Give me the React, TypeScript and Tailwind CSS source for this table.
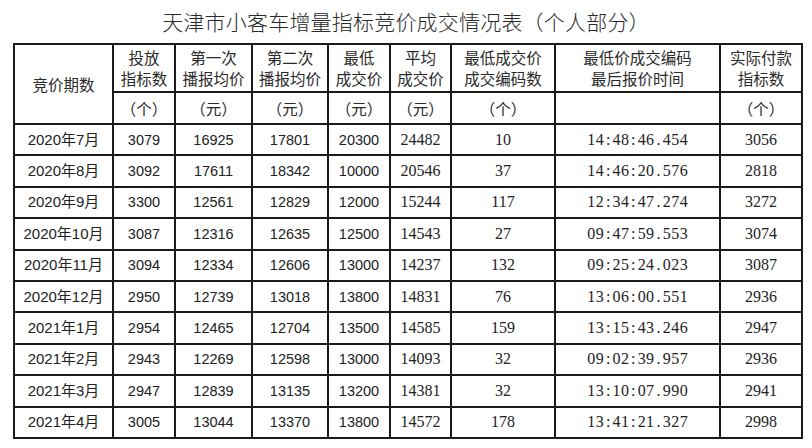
import React from "react";

const rows: string[][] = [
  ["2020年7月", "3079", "16925", "17801", "20300", "24482", "10", "14:48:46.454", "3056"],
  ["2020年8月", "3092", "17611", "18342", "10000", "20546", "37", "14:46:20.576", "2818"],
  ["2020年9月", "3300", "12561", "12829", "12000", "15244", "117", "12:34:47.274", "3272"],
  ["2020年10月", "3087", "12316", "12635", "12500", "14543", "27", "09:47:59.553", "3074"],
  ["2020年11月", "3094", "12334", "12606", "13000", "14237", "132", "09:25:24.023", "3087"],
  ["2020年12月", "2950", "12739", "13018", "13800", "14831", "76", "13:06:00.551", "2936"],
  ["2021年1月", "2954", "12465", "12704", "13500", "14585", "159", "13:15:43.246", "2947"],
  ["2021年2月", "2943", "12269", "12598", "13000", "14093", "32", "09:02:39.957", "2936"],
  ["2021年3月", "2947", "12839", "13135", "13200", "14381", "32", "13:10:07.990", "2941"],
  ["2021年4月", "3005", "13044", "13370", "13800", "14572", "178", "13:41:21.327", "2998"],
];

const widths = [99, 62, 77, 76, 62, 61, 104, 165, 82];

const cjk = "font-['Noto_Sans_CJK_SC',sans-serif] font-light";
const sans = "font-['Liberation_Sans','Noto_Sans_CJK_SC',sans-serif]";
const serif = "font-['Liberation_Serif','Noto_Sans_CJK_SC',serif]";

function TimeText({ t }: { t: string }) {
  return (
    <span className="inline-flex">
      {t.split("").map((c, i) => (
        <span key={i} className="inline-block w-[8.4px] text-center">
          {c}
        </span>
      ))}
    </span>
  );
}

const th = "border-2 border-[#1a1a1a] text-center align-middle p-0 text-[15.5px] leading-[21px] text-[#2a2a2a] font-normal";
const td = "border-2 border-[#1a1a1a] text-center align-middle p-0 text-[#222] leading-[20px]";

function Two({ a, b }: { a: string; b: string }) {
  return (
    <div className="flex flex-col items-center">
      <span>{a}</span>
      <span>{b}</span>
    </div>
  );
}

export default function App() {
  return (
    <div className="w-[812px] h-[448px] bg-white overflow-hidden">
      <div className={`h-[43px] flex items-center justify-center pt-[1px] text-[21px] text-[#2a2a2a] tracking-[0.2px] ${cjk}`}>
        天津市小客车增量指标竞价成交情况表（个人部分）
      </div>
      <table className="ml-[13px] w-[789px] table-fixed border-collapse border-2 border-black">
        <colgroup>
          {widths.map((w, i) => (
            <col key={i} style={{ width: w }} />
          ))}
        </colgroup>
        <thead>
          <tr className="h-[48px]">
            <th rowSpan={2} className={`${th} ${cjk}`}>竞价期数</th>
            <th className={`${th} ${cjk}`}><Two a="投放" b="指标数" /></th>
            <th className={`${th} ${cjk}`}><Two a="第一次" b="播报均价" /></th>
            <th className={`${th} ${cjk}`}><Two a="第二次" b="播报均价" /></th>
            <th className={`${th} ${cjk}`}><Two a="最低" b="成交价" /></th>
            <th className={`${th} ${cjk}`}><Two a="平均" b="成交价" /></th>
            <th className={`${th} ${cjk}`}><Two a="最低成交价" b="成交编码数" /></th>
            <th className={`${th} ${cjk}`}><Two a="最低价成交编码" b="最后报价时间" /></th>
            <th className={`${th} ${cjk}`}><Two a="实际付款" b="指标数" /></th>
          </tr>
          <tr className="h-[32px]">
            <th className={`${th} ${cjk}`}>（个）</th>
            <th className={`${th} ${cjk}`}>（元）</th>
            <th className={`${th} ${cjk}`}>（元）</th>
            <th className={`${th} ${cjk}`}>（元）</th>
            <th className={`${th} ${cjk}`}>（元）</th>
            <th className={`${th} ${cjk}`}>（个）</th>
            <th className={th}></th>
            <th className={`${th} ${cjk}`}>（个）</th>
          </tr>
        </thead>
        <tbody>
          {rows.map((r, ri) => (
            <tr key={ri} className="h-[31.4px]">
              {r.map((c, ci) => {
                if (ci === 0) {
                  return (
                    <td key={ci} className={`${td} ${sans} text-[15px]`}>
                      {c}
                    </td>
                  );
                }
                if (ci === 7) {
                  return (
                    <td key={ci} className={`${td} ${serif} text-[16px]`}>
                      <TimeText t={c} />
                    </td>
                  );
                }
                const f = ci <= 4 ? `${sans} text-[14.5px]` : `${serif} text-[16px]`;
                return (
                  <td key={ci} className={`${td} ${f}`}>
                    {c}
                  </td>
                );
              })}
            </tr>
          ))}
        </tbody>
      </table>
    </div>
  );
}
